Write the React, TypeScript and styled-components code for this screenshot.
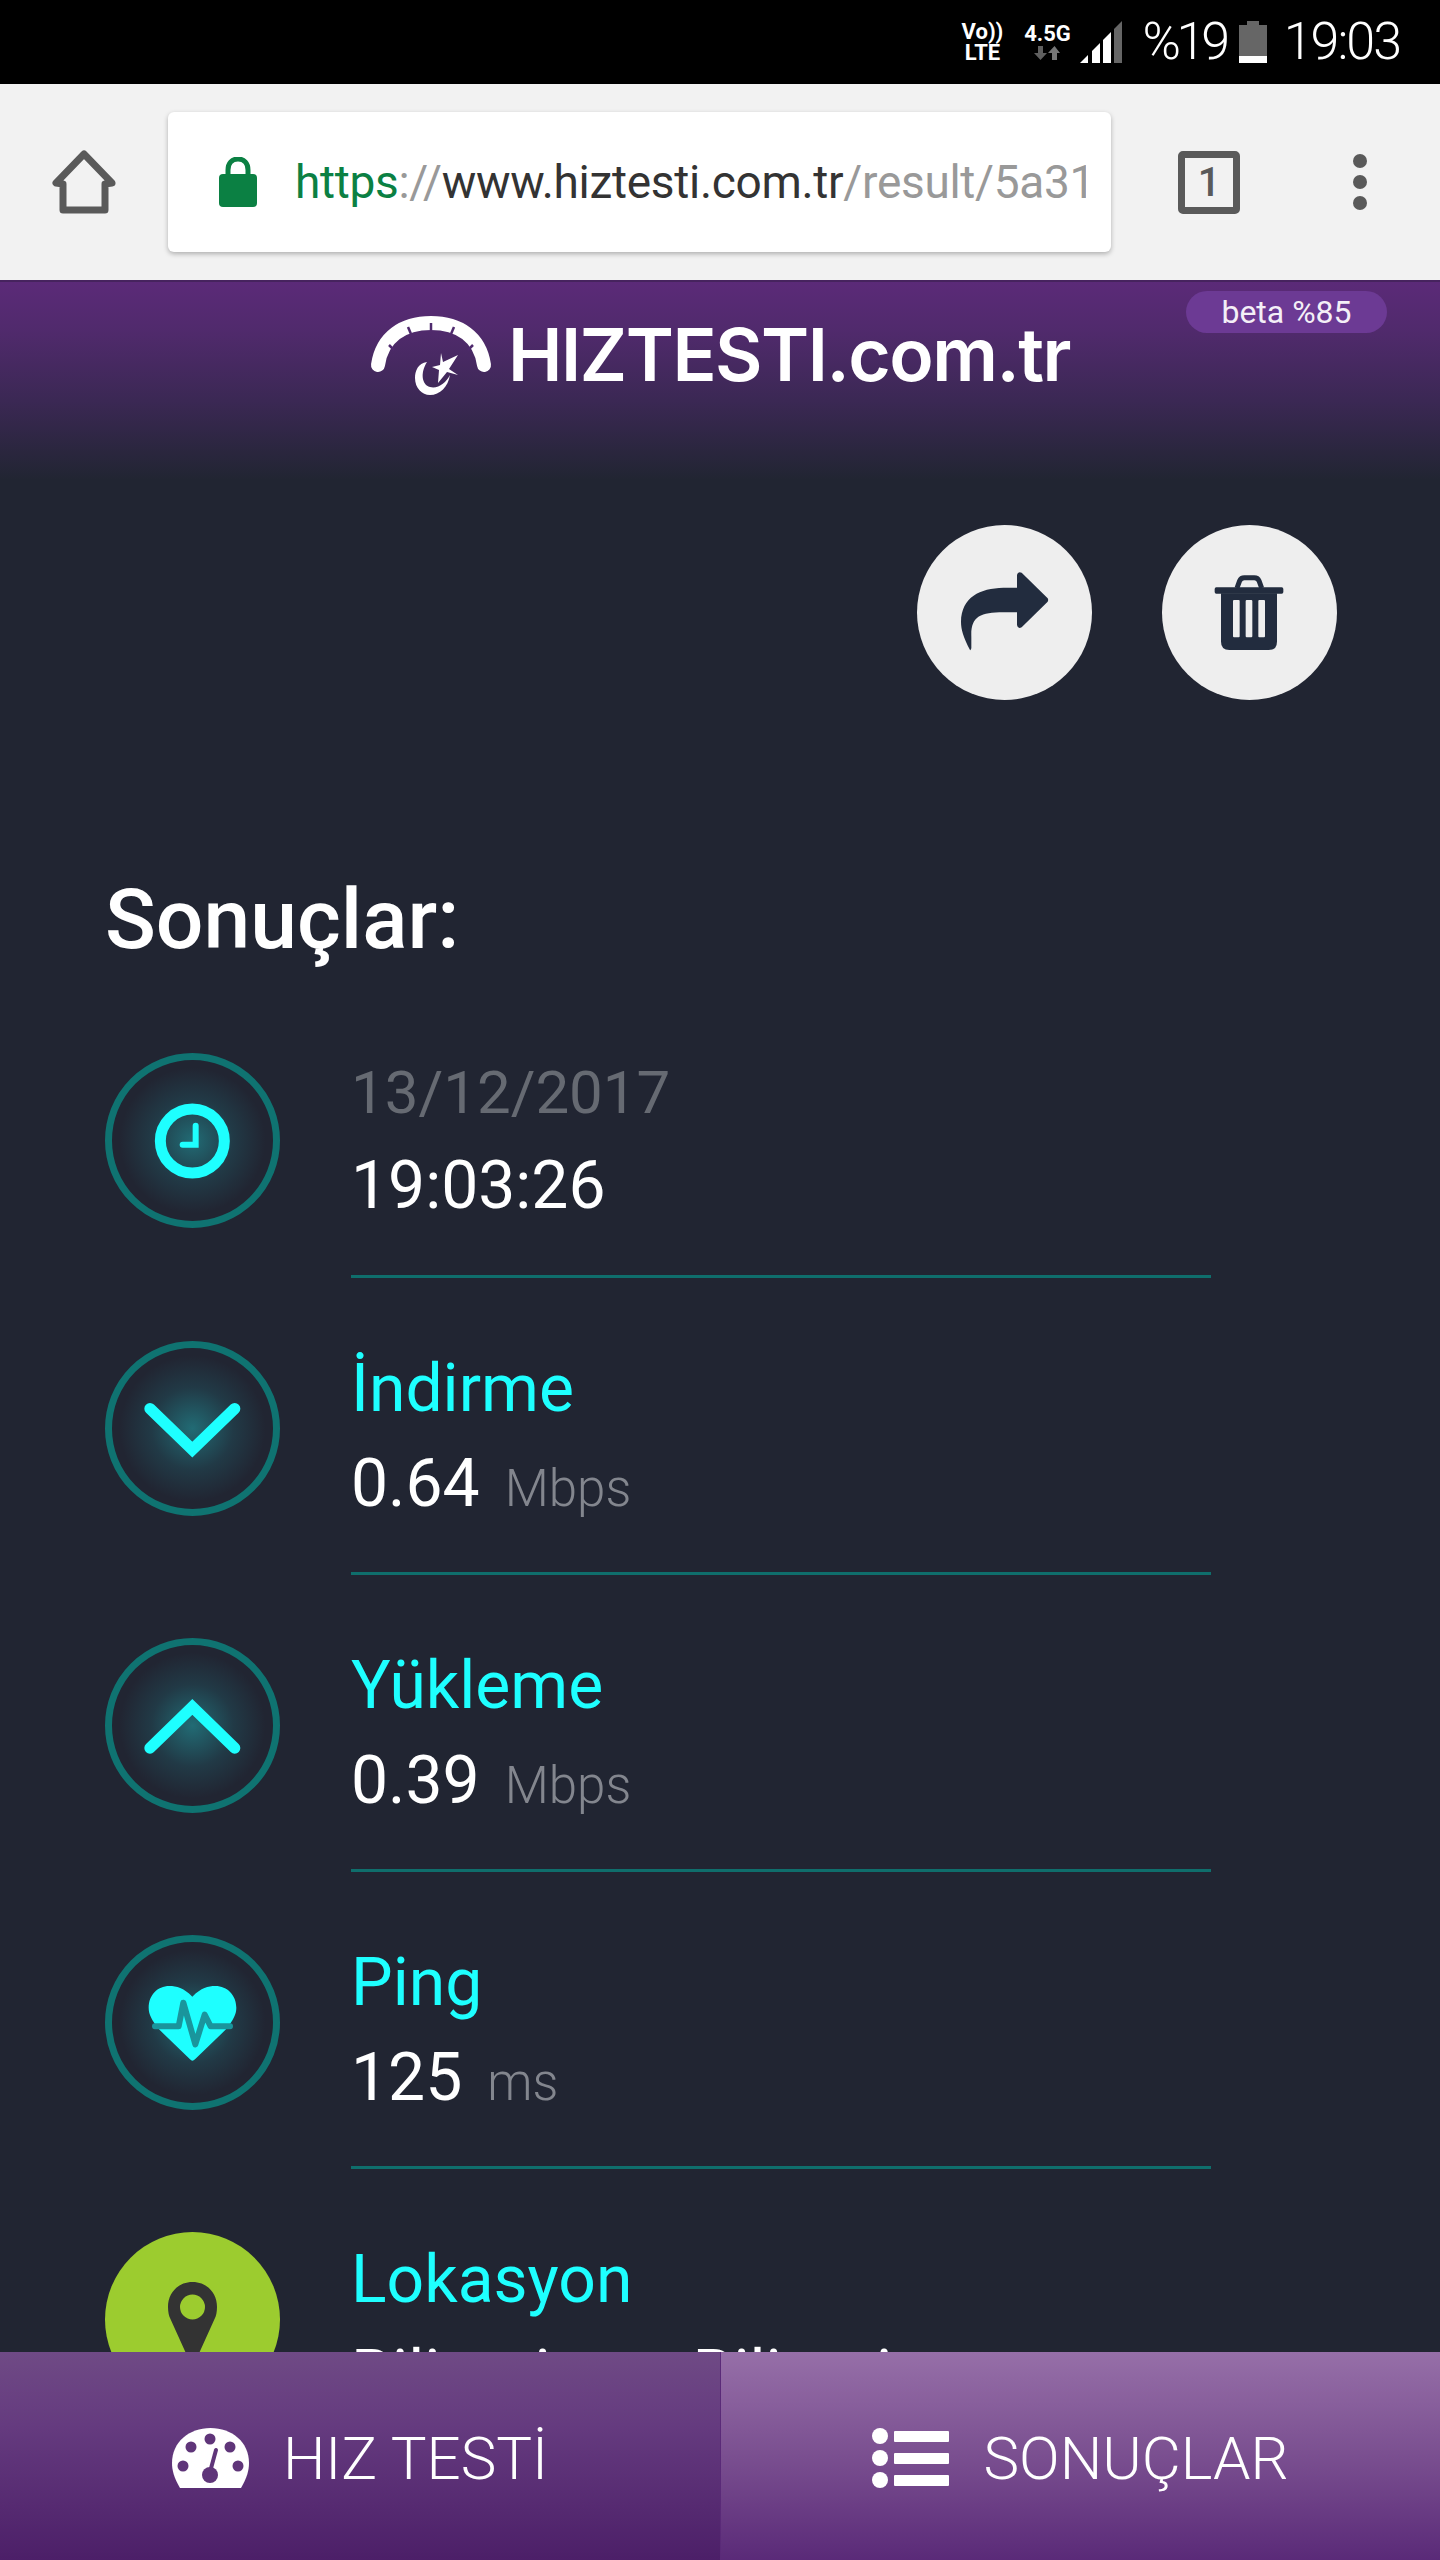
import styled, { createGlobalStyle } from 'styled-components';

const GlobalStyle = createGlobalStyle`
  html, body {
    margin: 0;
    padding: 0;
    background: #212532;
    font-family: Roboto, 'Liberation Sans', sans-serif;
  }
`;

const Page = styled.div`
  position: relative;
  width: 1440px;
  height: 2560px;
  overflow: hidden;
  background: #212532;
  color: #fff;
`;

const StatusBar = styled.div`
  height: 84px;
  background: #000;
  display: flex;
  justify-content: flex-end;
  align-items: center;
  padding-right: 40px;
  box-sizing: border-box;
`;

const NetworkLabel = styled.div`
  display: flex;
  flex-direction: column;
  align-items: center;
  font-weight: 700;
  font-size: 22px;
  line-height: 21px;
  width: 42px;
  margin-right: 20px;
`;

const SpeedLabel = styled.div`
  display: flex;
  flex-direction: column;
  align-items: center;
  font-weight: 700;
  font-size: 22px;
  line-height: 22px;
  width: 48px;
  margin-right: 9px;
`;

const StatusText = styled.span<{ $gap: number; $tracking: number }>`
  font-size: 52px;
  font-weight: 300;
  line-height: 60px;
  letter-spacing: ${(p) => p.$tracking}px;
  margin-left: ${(p) => p.$gap}px;
`;

const BrowserBar = styled.div`
  height: 196px;
  background: #f2f2f2;
  display: flex;
  align-items: center;
  position: relative;
  box-sizing: border-box;
  padding-left: 52px;
`;

const UrlBox = styled.div`
  width: 943px;
  height: 140px;
  margin-left: 52px;
  margin-right: 67px;
  background: #fff;
  border-radius: 6px;
  box-shadow: 0 2px 5px rgba(0, 0, 0, 0.28);
  display: flex;
  align-items: center;
  padding: 0 25px 0 51px;
  box-sizing: border-box;
  overflow: hidden;
`;

const UrlText = styled.div`
  margin-left: 38px;
  font-size: 46px;
  letter-spacing: -0.3px;
  white-space: nowrap;
  overflow: hidden;
  flex: 1;
  color: #999;
`;

const UrlGreen = styled.span`
  color: #0b8043;
`;

const UrlDark = styled.span`
  color: #333;
`;

const TabCount = styled.div`
  width: 62px;
  height: 63px;
  border: 7px solid #5a5a5a;
  border-radius: 5px;
  box-sizing: border-box;
  color: #5a5a5a;
  font-size: 40px;
  font-weight: 500;
  display: flex;
  align-items: center;
  justify-content: center;
  margin-right: 113px;
`;

const MenuDots = styled.div`
  display: flex;
  flex-direction: column;
  gap: 7px;
`;

const MenuDot = styled.span`
  width: 14px;
  height: 14px;
  border-radius: 50%;
  background: #5a5a5a;
`;

const Header = styled.header`
  position: relative;
  height: 200px;
  box-sizing: border-box;
  border-top: 2px solid #46235e;
  background: linear-gradient(180deg, #5b2a78 0%, #502a6c 25%, #3b2854 60%, #212532 100%);
  display: flex;
  justify-content: center;
  align-items: flex-start;
  padding-top: 33px;
  gap: 16px;
`;

const LogoText = styled.div`
  font-family: Inter, Roboto, sans-serif;
  font-size: 73px;
  font-weight: 600;
  line-height: 80px;
  letter-spacing: -1.5px;
  color: #fff;
`;

const BetaBadge = styled.span`
  position: absolute;
  top: 9px;
  right: 53px;
  width: 201px;
  height: 42px;
  border-radius: 21px;
  background: #6c3a94;
  color: #f4eff7;
  font-size: 32px;
  line-height: 42px;
  text-align: center;
`;

const Actions = styled.div`
  display: flex;
  justify-content: flex-end;
  gap: 70px;
  padding: 45px 103px 0 0;
`;

const ActionButton = styled.button`
  width: 175px;
  height: 175px;
  padding: 0;
  border: none;
  border-radius: 50%;
  background: #eeeeee;
  display: block;
`;

const Results = styled.main`
  padding: 175px 0 0 105px;
`;

const Title = styled.h1`
  margin: 0 0 88px;
  font-size: 84px;
  line-height: 90px;
  font-weight: 500;
  color: #fff;
`;

const Row = styled.section<{ $first?: boolean }>`
  display: grid;
  grid-template-columns: 175px 860px;
  column-gap: 71px;
  align-items: start;
  margin-top: ${(p) => (p.$first ? 0 : 63)}px;
`;

const RowIcon = styled.div`
  width: 175px;
  height: 175px;
  box-sizing: border-box;
  border: 7px solid #0f7371;
  border-radius: 50%;
  background: radial-gradient(circle, rgba(34, 190, 195, 0.46) 0%, rgba(34, 160, 170, 0.17) 36%, rgba(33, 37, 50, 0) 64%);
  display: flex;
  align-items: center;
  justify-content: center;

  svg {
    flex: none;
  }
`;

const PinBadge = styled.div`
  width: 175px;
  height: 175px;
  border-radius: 50%;
  background: #9ccc2f;
`;

const RowText = styled.div<{ $first?: boolean; $last?: boolean }>`
  margin-top: ${(p) => (p.$first ? -8 : 0)}px;
  padding-bottom: ${(p) => (p.$first ? 42 : 41)}px;
  border-bottom: ${(p) => (p.$last ? 'none' : '3px solid #0f6e6c')};
`;

const Label = styled.div<{ $muted?: boolean }>`
  font-size: ${(p) => (p.$muted ? 60 : 66)}px;
  line-height: 95px;
  height: ${(p) => (p.$muted ? 93 : 95)}px;
  color: ${(p) => (p.$muted ? '#666a72' : '#1effff')};
`;

const Value = styled.div`
  font-size: 66px;
  line-height: 95px;
  color: #fff;
  white-space: nowrap;
`;

const Unit = styled.span`
  margin-left: 25px;
  font-size: 51px;
  line-height: 1;
  font-weight: 300;
  color: #83868e;
`;

const BottomNav = styled.nav`
  position: absolute;
  left: 0;
  right: 0;
  bottom: 0;
  height: 208px;
  display: grid;
  grid-template-columns: 720px 720px;
`;

const NavItem = styled.div<{ $active?: boolean }>`
  display: flex;
  align-items: center;
  justify-content: center;
  gap: 34px;
  padding-top: 4px;
  box-sizing: border-box;
  border-left: ${(p) => (p.$active ? '1px solid #5a2a78' : 'none')};
  background: ${(p) =>
    p.$active
      ? 'linear-gradient(180deg, #966fa8 0%, #7a4f90 50%, #5a2a78 100%)'
      : 'linear-gradient(180deg, #6f4a85 0%, #653b7f 35%, #4c1f68 100%)'};
  font-size: 60px;
  font-weight: 300;
  color: #fff;
`;

const Logo = () => (
  <svg width="122" height="84" viewBox="0 0 122 84">
    <path d="M8 50C12 22 33 8 61 8C89 8 110 22 114 50" fill="none" stroke="#fff" strokeWidth="14" strokeLinecap="round" />
    <g fill="none" stroke="#4f2a6e" strokeWidth="2.5">
      <path d="M19 30l5 5" />
      <path d="M38 12l3 7" />
      <path d="M61 8v7" />
      <path d="M84 12l-3 7" />
      <path d="M103 30l-5 5" />
    </g>
    <path d="M57 47C48 48 45 56 45 63C45 73 52 80 60 80C70 80 78 72 80 60C76 68 68 74 60 72C52 70 50 58 57 47Z" fill="#fff" />
    <polygon points="71,38 73,47 88,40 79,54 88,60 77,57 68,68 69,55 62,52 70,50" fill="#fff" />
  </svg>
);

const App = () => (
  <Page>
    <GlobalStyle />
    <StatusBar>
      <NetworkLabel>
        <span>Vo))</span>
        <span>LTE</span>
      </NetworkLabel>
      <SpeedLabel>
        <span>4.5G</span>
        <svg width="26" height="16" viewBox="0 0 26 16">
          <path d="M4 1h5v7h4l-6.500 7L0 8h4z" fill="#5f5f5f" />
          <path d="M18 15h5V8h3l-5.500-7L14 8h4z" fill="#777" />
        </svg>
      </SpeedLabel>
      <svg width="42" height="42" viewBox="0 0 42 42">
        <path d="M0 42L8 34V42Z" fill="#fff" />
        <path d="M12 30L20 22V42H12Z" fill="#fff" />
        <path d="M23 19L31 11V42H23Z" fill="#fff" />
        <path d="M34 8L42 0V42H34Z" fill="#666" />
      </svg>
      <StatusText $gap={20} $tracking={-4.3}>%19</StatusText>
      <svg width="28" height="42" viewBox="0 0 28 42" style={{ marginLeft: 13 }}>
        <path d="M0 4H8V0H20V4H28V42H0Z" fill="#666" />
        <rect x="0" y="35" width="28" height="7" fill="#fff" />
      </svg>
      <StatusText $gap={17} $tracking={-2}>19:03</StatusText>
    </StatusBar>

    <BrowserBar>
      <svg width="64" height="64" viewBox="0 0 64 64">
        <path d="M32 4L4 33L11 34V60H53V34L60 33Z" fill="none" stroke="#5a5a5a" strokeWidth="7" strokeLinejoin="round" />
      </svg>
      <UrlBox>
        <svg width="38" height="50" viewBox="0 0 38 50">
          <path d="M9 20V13C9 6 13 2 19 2C25 2 29 6 29 13V20" fill="none" stroke="#0b8043" strokeWidth="5" />
          <rect x="0" y="17" width="38" height="33" rx="4" fill="#0b8043" />
        </svg>
        <UrlText>
          <UrlGreen>https</UrlGreen>://<UrlDark>www.hiztesti.com.tr</UrlDark>/result/5a31cf
        </UrlText>
      </UrlBox>
      <TabCount>1</TabCount>
      <MenuDots>
        <MenuDot />
        <MenuDot />
        <MenuDot />
      </MenuDots>
    </BrowserBar>

    <Header>
      <Logo />
      <LogoText>HIZTESTI.com.tr</LogoText>
      <BetaBadge>beta %85</BetaBadge>
    </Header>

    <Actions>
      <ActionButton aria-label="share">
        <svg width="175" height="175" viewBox="111 75 525 525">
          <path d="M270 450C250 410 243 390 243 365C245 290 300 265 370 263L411 263L411 225Q413 213 425 218L503 295Q506 300 503 305L425 382Q413 388 411 375L411 337L370 337C300 337 272 350 274 410L274 445Q272 452 270 450Z" fill="#222c3e" />
        </svg>
      </ActionButton>
      <ActionButton aria-label="delete">
        <svg width="175" height="175" viewBox="847 75 525 525">
          <path d="M1024 280H1192V425Q1192 450 1167 450H1049Q1024 450 1024 425Z" fill="#222c3e" />
          <rect x="1060" y="300" width="20" height="112" rx="3" fill="#eee" />
          <rect x="1098" y="300" width="20" height="112" rx="3" fill="#eee" />
          <rect x="1136" y="300" width="20" height="112" rx="3" fill="#eee" />
          <rect x="1005" y="262" width="206" height="19" rx="5" fill="#222c3e" />
          <path d="M1072 264L1080 242Q1084 233 1094 233H1124Q1134 233 1138 242L1146 264" fill="none" stroke="#222c3e" strokeWidth="15" />
        </svg>
      </ActionButton>
    </Actions>

    <Results>
      <Title>Sonuçlar:</Title>

      <Row $first>
        <RowIcon>
          <svg width="175" height="175" viewBox="75 70 525 525">
            <circle cx="337" cy="334" r="96" fill="none" stroke="#1effff" strokeWidth="33" />
            <path d="M347 288V345H308" fill="none" stroke="#1effff" strokeWidth="18" strokeLinecap="round" />
          </svg>
        </RowIcon>
        <RowText $first>
          <Label $muted>13/12/2017</Label>
          <Value>19:03:26</Value>
        </RowText>
      </Row>

      <Row>
        <RowIcon>
          <svg width="175" height="175" viewBox="75 62 525 525">
            <path d="M210 265L337 388L464 265" fill="none" stroke="#1effff" strokeWidth="34" strokeLinecap="round" />
          </svg>
        </RowIcon>
        <RowText>
          <Label>İndirme</Label>
          <Value>
            0.64<Unit>Mbps</Unit>
          </Value>
        </RowText>
      </Row>

      <Row>
        <RowIcon>
          <svg width="175" height="175" viewBox="75 62 525 525">
            <path d="M210 392L337 269L464 392" fill="none" stroke="#1effff" strokeWidth="34" strokeLinecap="round" />
          </svg>
        </RowIcon>
        <RowText>
          <Label>Yükleme</Label>
          <Value>
            0.39<Unit>Mbps</Unit>
          </Value>
        </RowText>
      </Row>

      <Row>
        <RowIcon>
          <svg width="175" height="175" viewBox="75 77 525 525">
            <path d="M337 262C310 235 290 230 268 230C232 230 206 258 206 295C206 315 215 332 237 360L330 450Q337 458 345 450L438 360C460 332 469 315 469 295C469 258 442 230 406 230C384 230 364 235 337 262Z" fill="#1effff" />
            <path d="M225 351H296L310 280L346 405L374 316L392 351H450" fill="none" stroke="#1a959c" strokeWidth="18" strokeLinejoin="round" strokeLinecap="round" />
          </svg>
        </RowIcon>
        <RowText>
          <Label>Ping</Label>
          <Value>
            125<Unit>ms</Unit>
          </Value>
        </RowText>
      </Row>

      <Row>
        <PinBadge>
          <svg width="175" height="175" viewBox="0 0 175 175">
            <path fillRule="evenodd" d="M87.500 50C73 50 63 61 63 75C63 80 64 84 65 86L84 128Q87.500 133 91 128L110 86C111 84 112 80 112 75C112 61 102 50 87.500 50ZM87.500 62.500A12.500 12.500 0 1 1 87.500 87.500A12.500 12.500 0 1 1 87.500 62.500Z" fill="#333" />
          </svg>
        </PinBadge>
        <RowText $last>
          <Label>Lokasyon</Label>
          <Value>Bilinmiyor - Bilinmiyor</Value>
        </RowText>
      </Row>
    </Results>

    <BottomNav>
      <NavItem>
        <svg width="77" height="60" viewBox="0 0 77 60">
          <path d="M8 60C2 50 0 42 0 35C0 14 17 0 38.500 0C60 0 77 14 77 35C77 42 75 50 69 60Z" fill="#fff" />
          <g fill="#5f3579">
            <circle cx="38" cy="11" r="5.500" />
            <circle cx="19" cy="19" r="5.500" />
            <circle cx="58" cy="19" r="5.500" />
            <circle cx="11" cy="38" r="5.500" />
            <circle cx="66" cy="38" r="5.500" />
            <circle cx="38" cy="47" r="8" />
          </g>
          <path d="M38 44L44 22" stroke="#5f3579" strokeWidth="4" strokeLinecap="round" />
        </svg>
        HIZ TESTİ
      </NavItem>
      <NavItem $active>
        <svg width="77" height="61" viewBox="0 0 77 61">
          <g fill="#fff">
            <circle cx="8" cy="8" r="8" />
            <circle cx="8" cy="30" r="8" />
            <circle cx="8" cy="52" r="8" />
            <rect x="22" y="3" width="55" height="11" rx="1" />
            <rect x="22" y="25" width="55" height="11" rx="1" />
            <rect x="22" y="47" width="55" height="11" rx="1" />
          </g>
        </svg>
        SONUÇLAR
      </NavItem>
    </BottomNav>
  </Page>
);

export default App;
